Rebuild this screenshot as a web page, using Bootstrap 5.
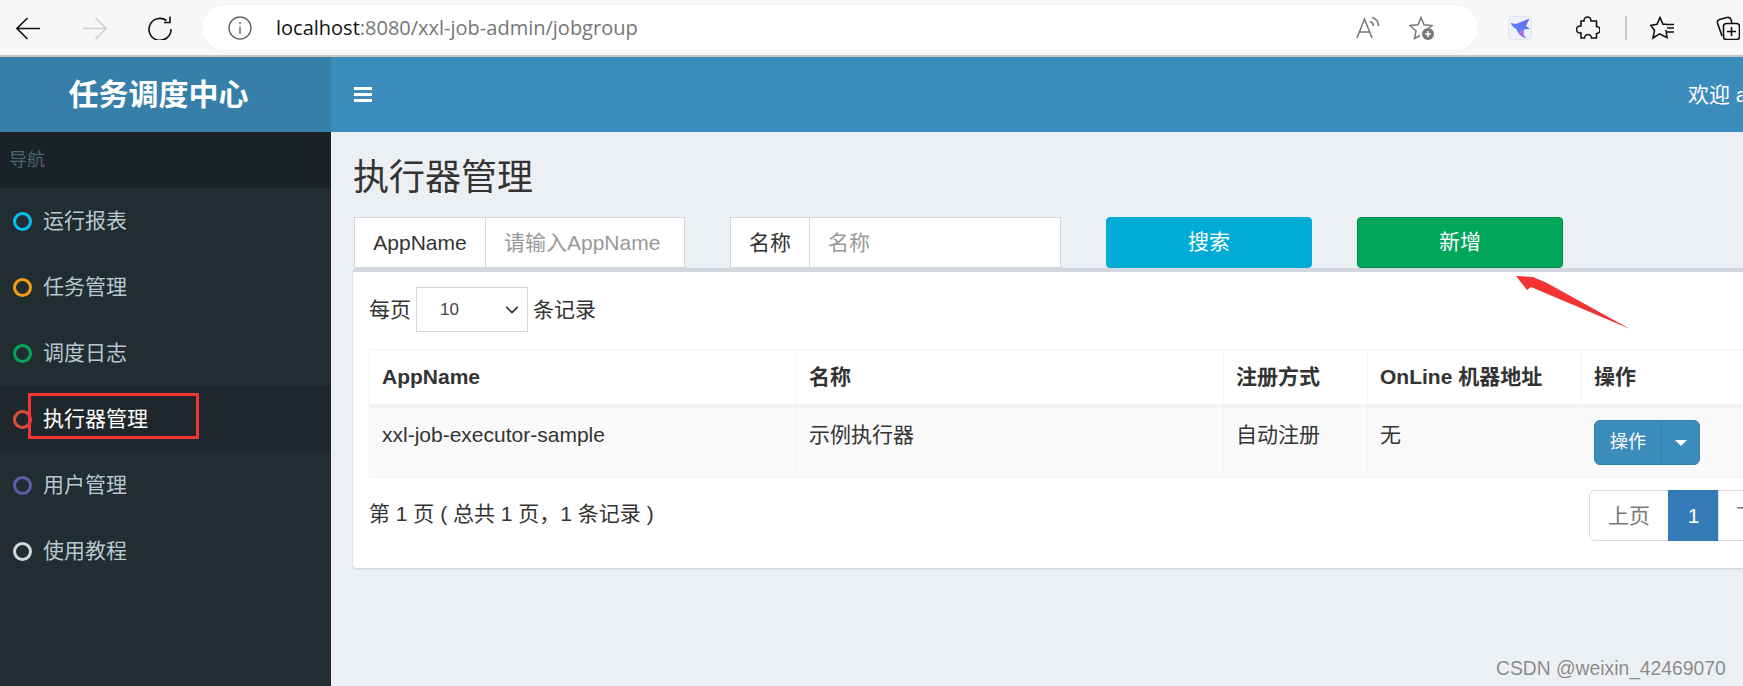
<!DOCTYPE html>
<html lang="zh-CN">
<head>
  <title>执行器管理</title>
  <meta charset="utf-8">
  <meta name="viewport" content="width=device-width, initial-scale=1">
  <link href="https://cdn.jsdelivr.net/npm/bootstrap@5.3.1/dist/css/bootstrap.min.css" rel="stylesheet">
  <style>
    html, body {
      height: 100%;
      overflow: hidden;
    }
    body {
      font-family: "Liberation Sans", "Noto Sans CJK SC", sans-serif;
      font-size: 21px;
      color: #333;
      background: #ecf0f5;
    }

    /* browser chrome */
    .chrome-bar {
      height: 57px;
      background: #f7f7f7;
      border-bottom: 2px solid #c8c6c4;
    }
    .chrome-slot {
      position: relative;
      width: 24px;
      height: 24px;
      flex: none;
    }
    .chrome-slot svg {
      display: block;
    }
    .slot-back { margin-left: 16px; }
    .slot-fwd { margin-left: 43px; }
    .slot-reload { margin-left: 41px; }
    .address-pill {
      width: 1276px;
      height: 45px;
      margin-left: 30px;
      background: #fff;
      border-radius: 23px;
      padding: 0 0 0 26px;
      box-shadow: 0 0 3px rgba(0, 0, 0, .06);
    }
    .address-url {
      margin-left: 24px;
      width: 1010px;
      font-family: "Open Sans", "Noto Sans", sans-serif;
      font-size: 20px;
      color: #767676;
    }
    .address-url b {
      font-weight: 400;
      color: #111;
    }
    .pill-read { margin-left: 70px; }
    .pill-star { margin-left: 29px; }
    .slot-bird { margin-left: 30px; }
    .slot-puzzle { margin-left: 44px; }
    .chrome-sep {
      width: 2px;
      height: 24px;
      margin-left: 25px;
      background: #c9c9c9;
    }
    .slot-favs { margin-left: 23px; }
    .slot-coll { margin-left: 42px; }

    /* app frame */
    .app-frame {
      height: 629px;
    }
    .side-col {
      width: 331px;
      flex: none;
      background: #222d32;
    }
    .side-brand {
      height: 75px;
      background: #367fa9;
      color: #fff;
      font-size: 30px;
      font-weight: 700;
      padding-right: 14px;
    }
    .side-head {
      height: 56px;
      padding-left: 9px;
      background: #1a2226;
      color: #4b646f;
      font-size: 18px;
    }
    .side-link {
      position: relative;
      height: 66px;
      padding: 0 0 0 13px;
      color: #b8c7ce;
      font-size: 21px;
    }
    .side-link:hover,
    .side-link:focus {
      color: #b8c7ce;
    }
    .side-link.is-open {
      background: #1e282c;
      color: #fff;
    }
    .side-dot {
      width: 19px;
      height: 19px;
      margin-right: 11px;
      border: 3px solid;
      border-radius: 50%;
      flex: none;
    }
    .dot-aqua { border-color: #00c0ef; }
    .dot-yellow { border-color: #f39c12; }
    .dot-green { border-color: #00a65a; }
    .dot-red { border-color: #dd4b39; }
    .dot-purple { border-color: #605ca8; }
    .dot-gray { border-color: #d2d6de; }
    .mark-box {
      position: absolute;
      left: 28px;
      top: 7px;
      width: 171px;
      height: 46px;
      border: 3px solid #f33333;
    }

    .main-col {
      min-width: 0;
      flex: 1;
      overflow: hidden;
    }
    .top-strip {
      height: 75px;
      padding: 0 0 0 23px;
      background: #3c8dbc;
      color: #fff;
    }
    .burger {
      width: 18px;
      height: 15px;
      flex: none;
      border-top: 3px solid #fff;
      border-bottom: 3px solid #fff;
      position: relative;
    }
    .burger::after {
      content: "";
      position: absolute;
      left: 0;
      right: 0;
      top: 3px;
      height: 3px;
      background: #fff;
    }
    .welcome {
      margin-left: 1316px;
      white-space: nowrap;
      font-size: 21px;
    }
    .content-wrap {
      width: 1482px;
      padding: 26px 0 0 22px;
    }
    .page-title {
      margin: 0 0 19px;
      font-size: 36px;
      font-weight: 400;
      line-height: 40px;
    }
    .filter-row {
      height: 51px;
      padding-left: 1px;
    }
    .filter-group {
      width: 331px;
      height: 51px;
      flex-wrap: nowrap;
    }
    .filter-group .input-group-text,
    .filter-group .form-control {
      border: 1px solid #d2d6de;
      border-radius: 0;
      background: #fff;
      color: #333;
      font-size: 21px;
    }
    .filter-group .input-group-text {
      width: 132px;
      padding: 0;
      justify-content: center;
      flex: none;
    }
    .filter-group.filter-name .input-group-text {
      width: 80px;
    }
    .filter-group .form-control {
      padding: 0 0 0 18px;
    }
    .filter-group .form-control::placeholder {
      color: #999;
    }
    .filter-name {
      margin-left: 45px;
    }
    .act-btn {
      width: 206px;
      height: 51px;
      margin-left: 45px;
      padding: 0 0 2px;
      font-size: 21px;
      color: #fff;
      border-radius: 4px;
    }
    .act-search {
      background: #00acd6;
      border-color: #00acd6;
    }
    .act-add {
      background: #00a65a;
      border-color: #008d4c;
    }
    .list-box {
      width: 1460px;
      height: 300px;
      padding: 15px 16px 0;
      background: #fff;
      border-top: 4px solid #d2d6de;
      border-radius: 4px;
      box-shadow: 0 1px 2px rgba(0, 0, 0, .15);
    }
    .page-size {
      height: 45px;
    }
    .page-size .form-select {
      width: 112px;
      height: 45px;
      margin: 0 5px;
      padding: 0 0 0 23px;
      border: 1px solid #d2d6de;
      border-radius: 0;
      color: #444;
      font-size: 17px;
      background-position: right 5px center;
      background-size: 20px 14px;
    }
    .job-table {
      width: 1428px;
      margin: 17px 0 0;
      table-layout: fixed;
      border-color: #f4f4f4;
      color: #333;
    }
    .job-table th,
    .job-table td {
      padding: 12px 12px 13px;
      border-color: #f4f4f4;
      line-height: 29px;
      font-size: 21px;
    }
    .job-table thead th {
      border-bottom: 4px solid #f4f4f4;
      font-weight: 700;
    }
    .job-table tbody td {
      padding: 12px 12px 12px;
      background: #f9f9f9;
      --bs-table-accent-bg: transparent;
      color: #333;
    }
    .col-app { width: 427px; }
    .col-reg { width: 144px; }
    .col-addr { width: 214px; }
    .row-btn {
      height: 45px;
      background: #3c8dbc;
      border-color: #367fa9;
      color: #fff;
      font-size: 18px;
      padding: 0;
    }
    .row-btn-main { width: 68px; }
    .row-btn-caret { width: 39px; }
    .row-btn-caret::after {
      margin-left: 0;
      vertical-align: middle;
      border-top-width: 6px;
      border-left-width: 6px;
      border-right-width: 6px;
    }
    .list-foot {
      margin-top: 12px;
      padding-right: 1px;
    }
    .foot-text {
      padding-top: 8px;
    }
    .foot-pages {
      margin: 0;
    }
    .foot-pages .page-link {
      width: 78px;
      height: 51px;
      padding: 0;
      line-height: 49px;
      text-align: center;
      color: #777;
      font-size: 21px;
      border-color: #ddd;
    }
    .foot-pages .page-first .page-link {
      width: 80px;
    }
    .foot-pages .page-num .page-link {
      width: 51px;
      background: #337ab7;
      border-color: #337ab7;
      color: #fff;
    }
    .note-arrow {
      position: absolute;
      left: 1510px;
      top: 270px;
    }
    .watermark {
      position: absolute;
      left: 1496px;
      top: 655px;
      font-size: 19.3px;
      color: #8a8a8a;
      text-shadow: 0 0 1px #fff;
      white-space: nowrap;
    }
  </style>
</head>
<body>

<div class="chrome-bar d-flex align-items-center">
  <div class="chrome-slot slot-back">
    <svg width="24" height="24" viewBox="0 0 24 24" fill="none" stroke="#111" stroke-width="1.6"><path d="M1 12.500H24M11.500 2L1 12.500L11.500 23"/></svg>
  </div>
  <div class="chrome-slot slot-fwd">
    <svg width="24" height="24" viewBox="0 0 24 24" fill="none" stroke="#cfcfcf" stroke-width="1.6"><path d="M0 12.500H23M12.500 2L23 12.500L12.500 23"/></svg>
  </div>
  <div class="chrome-slot slot-reload">
    <svg width="24" height="24" viewBox="0 0 24 24" fill="none" stroke="#111" stroke-width="1.6"><path d="M18.500 4.500A11 11 0 1 0 23 13M22 0.500V6.500H16"/></svg>
  </div>
  <div class="address-pill d-flex align-items-center">
    <div class="chrome-slot">
      <svg width="24" height="24" viewBox="0 0 24 24" fill="none" stroke="#666" stroke-width="1.4"><circle cx="12" cy="12" r="11"/><path d="M12 10.500V18M12 6V8"/></svg>
    </div>
    <div class="address-url"><b>localhost</b>:8080/xxl-job-admin/jobgroup</div>
    <div class="chrome-slot pill-read">
      <svg width="24" height="24" viewBox="0 0 24 24" fill="none" stroke="#777" stroke-width="1.5"><path d="M1 22L8.500 3L16 22M3.500 16H13.500M14 5.500A5 5 0 0 1 17.500 10M16 1.500A9 9 0 0 1 22.500 10"/></svg>
    </div>
    <div class="chrome-slot pill-star">
      <svg width="26" height="24" viewBox="0 0 26 24" fill="none" stroke="#777" stroke-width="1.5"><path d="M11 19.500L5.500 22.500L7 15L1 9.500L9 8.700L12 1.500L15 8.700L23 9.500L18 13.500"/><circle cx="19" cy="18" r="6" fill="#777" stroke="none"/><path d="M19 15V21M16 18H22" stroke="#fff" stroke-width="1.6"/></svg>
    </div>
  </div>
  <div class="chrome-slot slot-bird">
    <svg width="24" height="24" viewBox="0 0 24 24"><rect x=".5" y=".5" width="23" height="23" rx="3" fill="#eef0fb" stroke="#e3e5f5"/><path d="M2.500 7L8 8L21.500 2.500L18 10L22 13L16 13.500C15 17 15 19 18 22C13 21 9.500 17 8.500 13C6 12 4 10 2.500 7Z" fill="#5f78f0"/><path d="M16 13.500C15 17 15 19 18 22C14 21 11.500 18.500 10 15.500Z" fill="#b06cf0"/></svg>
  </div>
  <div class="chrome-slot slot-puzzle">
    <svg width="24" height="24" viewBox="0 0 24 24" fill="none" stroke="#111" stroke-width="1.6"><path d="M8 5V4.500A3.500 3.500 0 0 1 15 4.500V5H20.500V10.500A3.500 3.500 0 0 1 20.500 17.500V22H15.500A3.500 3.500 0 0 0 8.500 22H5V17H4A3.500 3.500 0 0 1 4 10H5V5Z"/></svg>
  </div>
  <div class="chrome-sep"></div>
  <div class="chrome-slot slot-favs">
    <svg width="24" height="24" viewBox="0 0 24 24" fill="none" stroke="#111" stroke-width="1.6"><path d="M16 14L17 21.500L9.500 17.800L3 22L4.500 14.500L.8 9.500L7 8.300L10 1.500L13 8.300H16M16 8.500H24M17 12H24M17 16H24"/></svg>
  </div>
  <div class="chrome-slot slot-coll">
    <svg width="24" height="24" viewBox="0 0 24 24" fill="none" stroke="#111" stroke-width="1.6"><path d="M6 20L1.500 7C1 5 2 4 3.500 3.500L11 1.500C13 1 14.500 2 15 3.500L16 7"/><rect x="7.500" y="7.500" width="16" height="16" rx="3"/><path d="M15.500 11V20M11 15.500H20"/></svg>
  </div>
</div>

<div class="app-frame d-flex">
  <aside class="side-col">
    <div class="side-brand d-flex align-items-center justify-content-center">任务调度中心</div>
    <div class="side-head d-flex align-items-center">导航</div>
    <nav class="nav flex-column">
      <a class="nav-link side-link d-flex align-items-center" href="#"><span class="side-dot dot-aqua"></span>运行报表</a>
      <a class="nav-link side-link d-flex align-items-center" href="#"><span class="side-dot dot-yellow"></span>任务管理</a>
      <a class="nav-link side-link d-flex align-items-center" href="#"><span class="side-dot dot-green"></span>调度日志</a>
      <a class="nav-link side-link is-open d-flex align-items-center" href="#"><span class="side-dot dot-red"></span>执行器管理<span class="mark-box"></span></a>
      <a class="nav-link side-link d-flex align-items-center" href="#"><span class="side-dot dot-purple"></span>用户管理</a>
      <a class="nav-link side-link d-flex align-items-center" href="#"><span class="side-dot dot-gray"></span>使用教程</a>
    </nav>
  </aside>

  <main class="main-col">
    <div class="top-strip d-flex align-items-center">
      <span class="burger"></span>
      <span class="welcome">欢迎 admin</span>
    </div>
    <div class="content-wrap">
      <h1 class="page-title">执行器管理</h1>
      <div class="filter-row d-flex">
        <div class="input-group filter-group">
          <span class="input-group-text">AppName</span>
          <input type="text" class="form-control" placeholder="请输入AppName">
        </div>
        <div class="input-group filter-group filter-name">
          <span class="input-group-text">名称</span>
          <input type="text" class="form-control" placeholder="名称">
        </div>
        <button type="button" class="btn act-btn act-search">搜索</button>
        <button type="button" class="btn act-btn act-add">新增</button>
      </div>
      <div class="list-box">
        <div class="page-size d-flex align-items-center">
          <span>每页</span>
          <select class="form-select">
            <option>10</option>
            <option>25</option>
            <option>50</option>
          </select>
          <span>条记录</span>
        </div>
        <table class="table table-bordered job-table">
          <thead>
            <tr>
              <th class="col-app">AppName</th>
              <th class="col-app">名称</th>
              <th class="col-reg">注册方式</th>
              <th class="col-addr">OnLine 机器地址</th>
              <th>操作</th>
            </tr>
          </thead>
          <tbody>
            <tr>
              <td>xxl-job-executor-sample</td>
              <td>示例执行器</td>
              <td>自动注册</td>
              <td>无</td>
              <td>
                <div class="btn-group">
                  <button type="button" class="btn row-btn row-btn-main">操作</button>
                  <button type="button" class="btn row-btn row-btn-caret dropdown-toggle"></button>
                </div>
              </td>
            </tr>
          </tbody>
        </table>
        <div class="list-foot d-flex justify-content-between align-items-start">
          <div class="foot-text">第 1 页 ( 总共 1 页，1 条记录 )</div>
          <ul class="pagination foot-pages">
            <li class="page-item page-first"><a class="page-link" href="#">上页</a></li>
            <li class="page-item page-num"><a class="page-link" href="#">1</a></li>
            <li class="page-item"><a class="page-link" href="#">下页</a></li>
          </ul>
        </div>
      </div>
    </div>
  </main>
</div>

<svg class="note-arrow" width="124" height="62" viewBox="0 0 124 62"><path d="M6 6L23 7L37 13L120 59L21 17L17 20Z" fill="#f33333"/></svg>
<div class="watermark">CSDN @weixin_42469070</div>

<script src="https://cdn.jsdelivr.net/npm/bootstrap@5.3.1/dist/js/bootstrap.bundle.min.js"></script>
</body>
</html>
